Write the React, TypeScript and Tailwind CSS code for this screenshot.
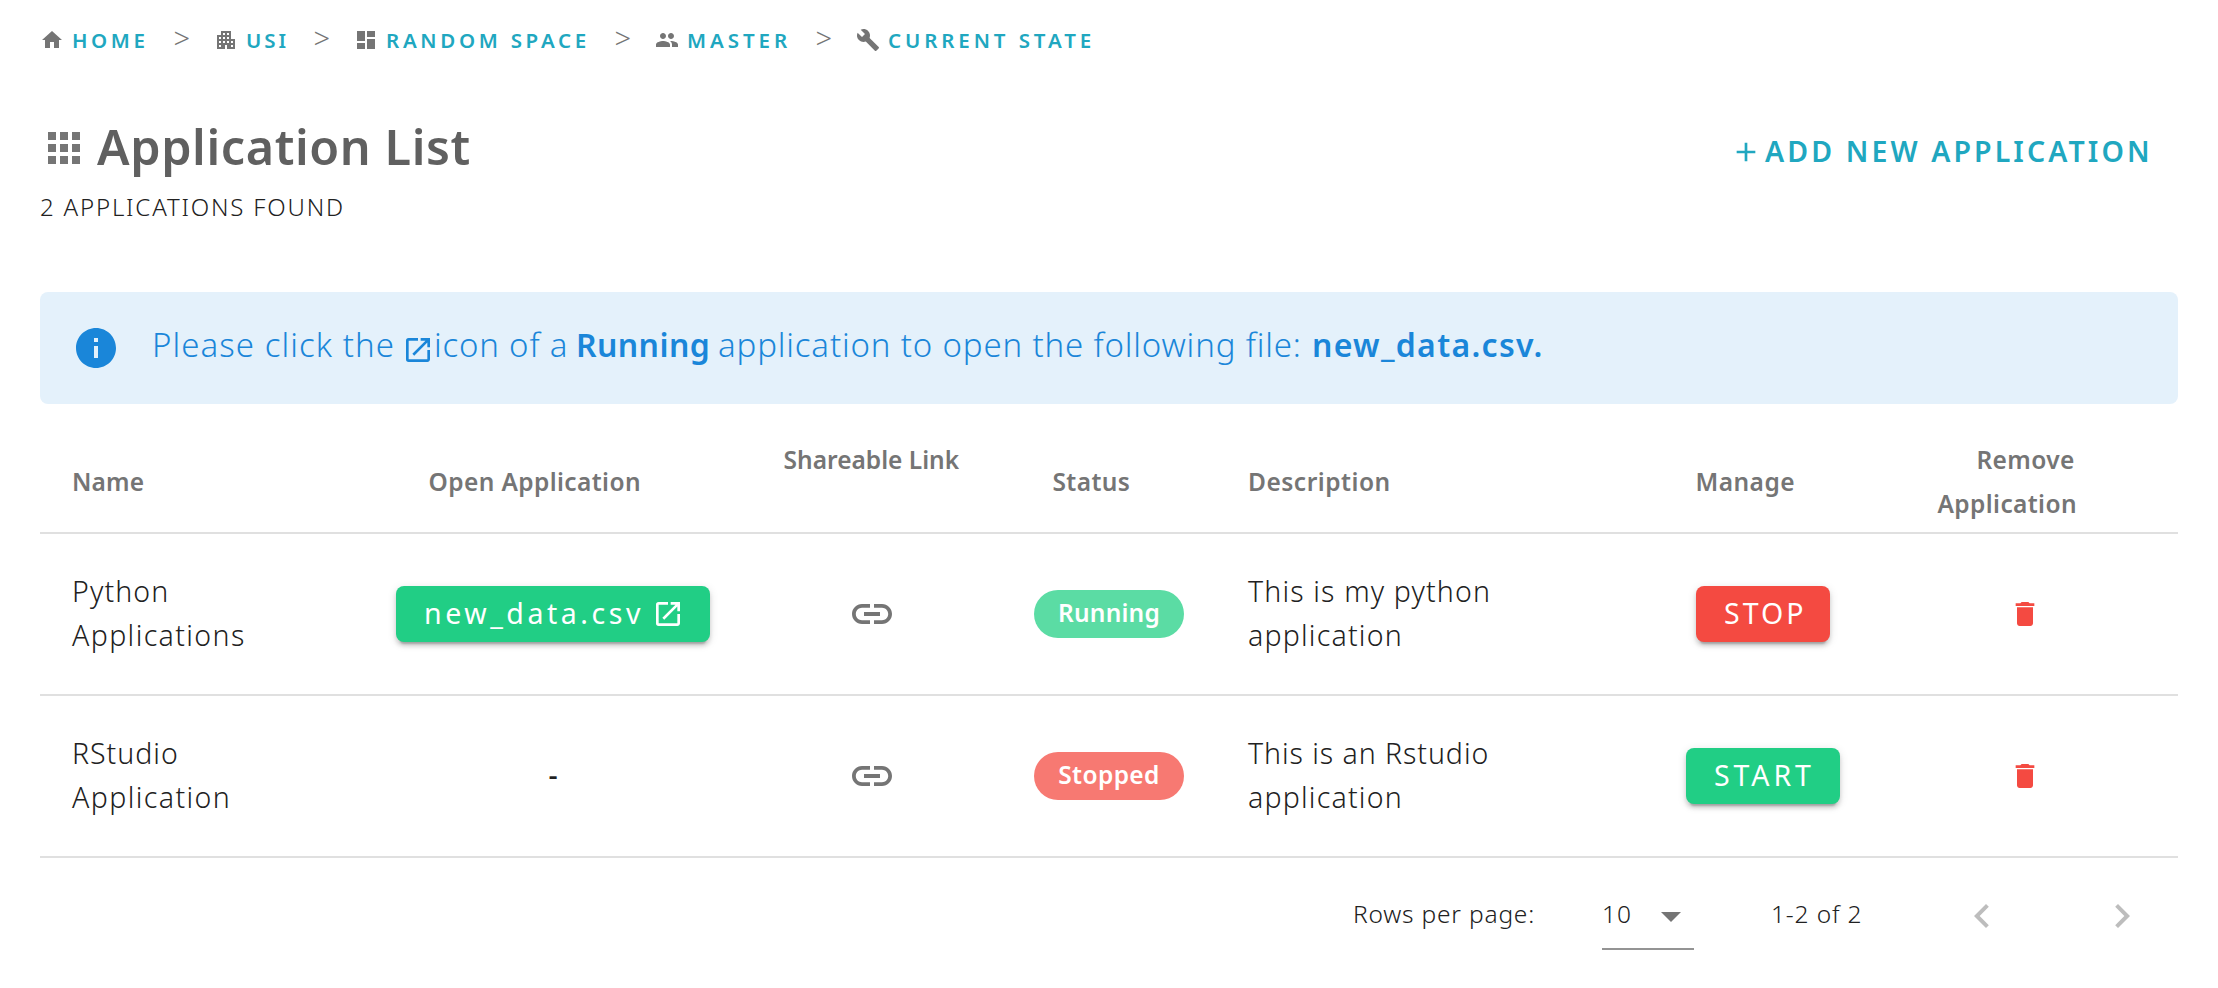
import type { ReactNode } from "react";
import {
  MdAdd,
  MdApps,
  MdArrowDropDown,
  MdBuild,
  MdChevronLeft,
  MdChevronRight,
  MdDashboard,
  MdDelete,
  MdHome,
  MdInfo,
  MdLink,
  MdOpenInNew,
  MdPeople,
} from "react-icons/md";

const columns =
  "grid grid-cols-[321px_384px_254px_220px_435px_218px_306px] border-b-2 border-[#e0e0e0]";
const raised =
  "shadow-[0_6px_2px_-4px_rgba(0,0,0,0.2),0_4px_4px_0_rgba(0,0,0,0.14),0_2px_10px_0_rgba(0,0,0,0.12)]";

/* Office block with a stepped right wing, used for the organization crumb. */
function OrganizationIcon() {
  return (
    <svg viewBox="0 0 24 24" className="size-6 shrink-0" fill="currentColor">
      <path d="M17 11V3H7v4H3v14h8v-4h2v4h8V11h-4zM7 19H5v-2h2v2zm0-4H5v-2h2v2zm0-4H5V9h2v2zm4 4H9v-2h2v2zm0-4H9V9h2v2zm0-4H9V5h2v2zm4 8h-2v-2h2v2zm0-4h-2V9h2v2zm0-4h-2V5h2v2zm4 12h-2v-2h2v2zm0-4h-2v-2h2v2z" />
    </svg>
  );
}

function Crumb({
  icon,
  width,
  spacing,
  label,
  last = false,
}: {
  icon: ReactNode;
  width: string;
  spacing: string;
  label: string;
  last?: boolean;
}) {
  return (
    <li className={`flex items-center justify-between ${width}`}>
      <a className="flex items-center gap-2">
        <span className="text-[#757575]">{icon}</span>
        <span className={`font-semibold text-[20.5px] text-[#20a7c0] ${spacing}`}>{label}</span>
      </a>
      {!last && (
        <span className="pr-[24px] pb-[5px] text-[29px] leading-9 font-light text-[#757575]">&gt;</span>
      )}
    </li>
  );
}

function Row({
  name,
  open,
  status,
  statusStyle,
  description,
  action,
}: {
  name: ReactNode;
  open: ReactNode;
  status: string;
  statusStyle: string;
  description: ReactNode;
  action: ReactNode;
}) {
  return (
    <div className={`${columns} h-[162px] items-center text-[28.5px] leading-[44px] font-light`}>
      <div className="pb-[3px] pl-8">{name}</div>
      <div className="flex justify-center">{open}</div>
      <div className="flex justify-center text-[#757575]">
        <MdLink className="size-12" />
      </div>
      <div className="flex justify-center">
        <span
          className={`flex h-12 w-[150px] items-center justify-center rounded-full pb-[3px] text-[24.5px] font-semibold text-white ${statusStyle}`}
        >
          {status}
        </span>
      </div>
      <div className="pb-[3px] pl-[29px]">{description}</div>
      <div className="flex justify-center">{action}</div>
      <div className="flex justify-center text-[#f44a41]">
        <MdDelete className="size-8" />
      </div>
    </div>
  );
}

export default function App() {
  return (
    <div className="h-[988px] w-[2218px] overflow-hidden bg-white px-10 pt-5 font-['Noto_Sans',sans-serif] whitespace-nowrap text-[#212121]">
      <nav>
        <ol className="flex h-10 items-center">
          <Crumb icon={<MdHome className="size-6" />} width="w-[174px]" spacing="tracking-[3.6px]" label="HOME" />
          <Crumb icon={<OrganizationIcon />} width="w-[140px]" spacing="tracking-[3px]" label="USI" />
          <Crumb icon={<MdDashboard className="size-6" />} width="w-[301px]" spacing="tracking-[3.7px]" label="RANDOM SPACE" />
          <Crumb icon={<MdPeople className="size-6" />} width="w-[201px]" spacing="tracking-[3.95px]" label="MASTER" />
          <Crumb icon={<MdBuild className="size-6" />} width="w-[260px]" spacing="tracking-[3.9px]" label="CURRENT STATE" last />
        </ol>
      </nav>

      <header className="mt-[57px] flex h-[175px] justify-between">
        <div>
          <div className="flex h-14 items-start gap-[9px]">
            <MdApps className="mt-[7px] size-12 text-[#757575]" />
            <h1 className="pt-px text-[48.5px] leading-[56px] font-semibold tracking-[0.6px] text-[#606060]">
              Application List
            </h1>
          </div>
          <p className="mt-4 text-[24px] leading-9 font-light tracking-[1.82px]">2 APPLICATIONS FOUND</p>
        </div>
        <button className="mt-4 flex h-[38px] w-[448px] items-center gap-[3px] text-[28.5px] font-semibold tracking-[3.1px] text-[#20a7c0]">
          <MdAdd className="size-8 shrink-0" />
          <span className="pb-[2px]">ADD NEW APPLICATION</span>
        </button>
      </header>

      <div className="flex h-28 items-center rounded-lg bg-[#e4f1fb] pl-8 text-[33px] leading-[48px] font-light text-[#1a86d9]">
        <MdInfo className="size-12" />
        <p className="ml-[32px] flex items-center pb-[6px]">
          <span className="w-[250px] tracking-[1.06px]">Please click the</span>
          <MdOpenInNew className="mt-[9px] size-8" />
          <span className="w-[142px] tracking-[0.8px]">icon of a</span>
          <strong className="w-[142px] text-[32px] font-semibold tracking-[0.4px]">Running</strong>
          <span className="w-[594px] tracking-[0.84px]">application to open the following file:</span>
          <strong className="text-[32px] font-semibold tracking-[1.3px]">new_data.csv.</strong>
        </p>
      </div>

      <section>
        <div className={`${columns} h-[130px] items-start pt-[34px] text-[24.5px] leading-[44px] font-semibold text-[#757575]`}>
          <div className="mt-[22px] pl-8 tracking-[0.16px]">Name</div>
          <div className="mt-[22px] pl-[67.6px] tracking-[0.38px]">Open Application</div>
          <div className="pl-[38.6px] tracking-[0px]">Shareable Link</div>
          <div className="mt-[22px] pl-[53.5px] tracking-[0.4px]">Status</div>
          <div className="mt-[22px] pl-[29px] tracking-[0.5px]">Description</div>
          <div className="mt-[22px] pl-[41.4px] tracking-[0.5px]">Manage</div>
          <div className="tracking-[0.38px]">
            <div className="pl-[104.4px]">Remove</div>
            <div className="pl-[65.5px]">Application</div>
          </div>
        </div>

        <Row
          name={
            <>
              <div className="tracking-[1.13px]">Python</div>
              <div className="tracking-[1.38px]">Applications</div>
            </>
          }
          open={
            <button className={`flex h-14 w-[314px] items-center rounded-lg bg-[#21ce85] pl-7 font-normal text-white ${raised}`}>
              <span className="w-[228px] pb-[3px] text-left tracking-[3.55px]">new_data.csv</span>
              <MdOpenInNew className="size-8" />
            </button>
          }
          status="Running"
          statusStyle="bg-[#5bdca4] tracking-[0.2px]"
          description={
            <>
              <div className="tracking-[1.15px]">This is my python</div>
              <div className="tracking-[1.2px]">application</div>
            </>
          }
          action={
            <button className={`h-14 w-[134px] rounded-lg bg-[#f44a41] pb-[2px] pl-[28px] text-left font-normal tracking-[3px] text-white ${raised}`}>
              STOP
            </button>
          }
        />
        <Row
          name={
            <>
              <div className="tracking-[0.98px]">RStudio</div>
              <div className="tracking-[1.4px]">Application</div>
            </>
          }
          open={<span className="pb-[5px] font-medium">-</span>}
          status="Stopped"
          statusStyle="bg-[#f77972] tracking-[0.4px]"
          description={
            <>
              <div className="tracking-[0.94px]">This is an Rstudio</div>
              <div className="tracking-[1.2px]">application</div>
            </>
          }
          action={
            <button className={`h-14 w-[154px] rounded-lg bg-[#21ce85] pb-[2px] pl-[28px] text-left font-normal tracking-[3.9px] text-white ${raised}`}>
              START
            </button>
          }
        />
      </section>

      <footer className="flex h-[116px] items-center pl-[1313px] text-[24.5px] leading-9 font-light">
        <span className="w-[249px] pb-[4px] tracking-[0.8px]">Rows per page:</span>
        <div className="flex h-[68px] w-[92px] items-center border-b-2 border-[#949494]">
          <span className="w-[45px] shrink-0 pb-[2px] tracking-[1px]">10</span>
          <MdArrowDropDown className="mt-[2px] size-12 shrink-0 text-[#757575]" />
        </div>
        <span className="ml-[77px] w-[187px] pb-[4px] tracking-[0.85px]">1-2 of 2</span>
        <MdChevronLeft className="size-12 text-[#bdbdbd]" />
        <MdChevronRight className="ml-[92px] size-12 text-[#bdbdbd]" />
      </footer>
    </div>
  );
}
